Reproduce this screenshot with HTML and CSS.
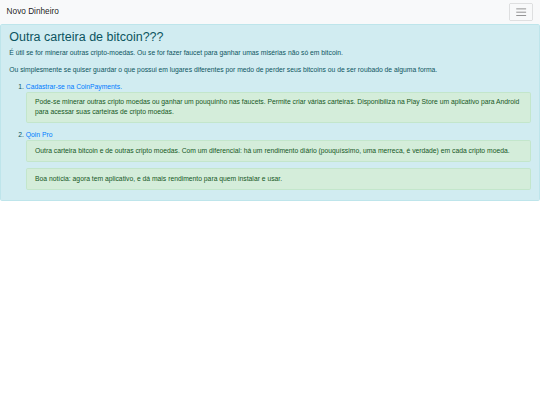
FILE: index.html
```html
<!DOCTYPE html>
<html lang="pt">
<head>
<meta charset="utf-8">
<title>Novo Dinheiro</title>
<link rel="stylesheet" href="styles.css">
</head>
<body>
<nav class="navbar">
  <a class="brand" href="#">Novo Dinheiro</a>
  <button class="toggler" type="button" aria-label="Menu">
    <svg class="toggler-icon" viewBox="0 0 30 30" xmlns="http://www.w3.org/2000/svg"><path stroke="rgba(0,0,0,0.5)" stroke-linecap="round" stroke-miterlimit="10" stroke-width="2" d="M4 7h22M4 15h22M4 23h22"/></svg>
  </button>
</nav>
<div class="alert alert-info">
  <h1 class="alert-heading">Outra carteira de bitcoin???</h1>
  <p>É útil se for minerar outras cripto-moedas. Ou se for fazer faucet para ganhar umas misérias não só em bitcoin.</p>
  <p>Ou simplesmente se quiser guardar o que possui em lugares diferentes por medo de perder seus bitcoins ou de ser roubado de alguma forma.</p>
  <ol class="list">
    <li>
      <a href="#">Cadastrar-se na CoinPayments.</a>
      <div class="alert alert-success">Pode-se minerar outras cripto moedas ou ganhar um pouquinho nas faucets. Permite criar várias carteiras. Disponibiliza na Play Store um aplicativo para Android para acessar suas carteiras de cripto moedas.</div>
    </li>
    <li>
      <a href="#">Qoin Pro</a>
      <div class="alert alert-success">Outra carteira bitcoin e de outras cripto moedas. Com um diferencial: há um rendimento diário (pouquíssimo, uma merreca, é verdade) em cada cripto moeda.</div>
      <div class="alert alert-success">Boa notícia: agora tem aplicativo, e dá mais rendimento para quem instalar e usar.</div>
    </li>
  </ol>
</div>
</body>
</html>
```
FILE: styles.css
```css
html {
  font-size: 6.6px;
}
body {
  margin: 0;
  font-family: "Liberation Sans", Arial, Helvetica, sans-serif;
  font-size: 6.78px;
  line-height: 1.47;
  color: #212529;
  background: #fff;
}
.navbar {
  display: flex;
  align-items: center;
  justify-content: space-between;
  padding: 0.5rem 1rem;
  background: #f8f9fa;
}
.brand {
  display: inline-block;
  padding: 0.3125rem 0;
  font-size: 1.25rem;
  line-height: 1.5;
  color: rgba(0, 0, 0, 0.9);
  text-decoration: none;
}
.toggler {
  display: flex;
  align-items: center;
  justify-content: center;
  padding: 0.25rem 0.75rem;
  font-size: 1.25rem;
  line-height: 1;
  background: transparent;
  border: 1px solid rgba(0, 0, 0, 0.1);
  border-radius: 0.25rem;
}
.toggler-icon {
  display: block;
  width: 1.5em;
  height: 1.5em;
}
.alert {
  padding: 0.75rem 1.25rem;
  margin-bottom: 1rem;
  border: 1px solid transparent;
  border-radius: 0.25rem;
}
.alert-info {
  margin-bottom: 0;
  padding-bottom: 0.45rem;
  color: #0c5460;
  background: #d1ecf1;
  border-color: #bee5eb;
}
.alert-success {
  color: #155724;
  background: #d4edda;
  border-color: #c3e6cb;
}
.alert-heading {
  margin: 0 0 0.5rem;
  font-size: 12.5px;
  font-weight: 500;
  line-height: 1.2;
  color: inherit;
}
p {
  margin: 0 0 1rem;
}
.list {
  margin: 0;
  padding-left: 2.5rem;
}
.list a {
  color: #007bff;
  text-decoration: none;
}
```
